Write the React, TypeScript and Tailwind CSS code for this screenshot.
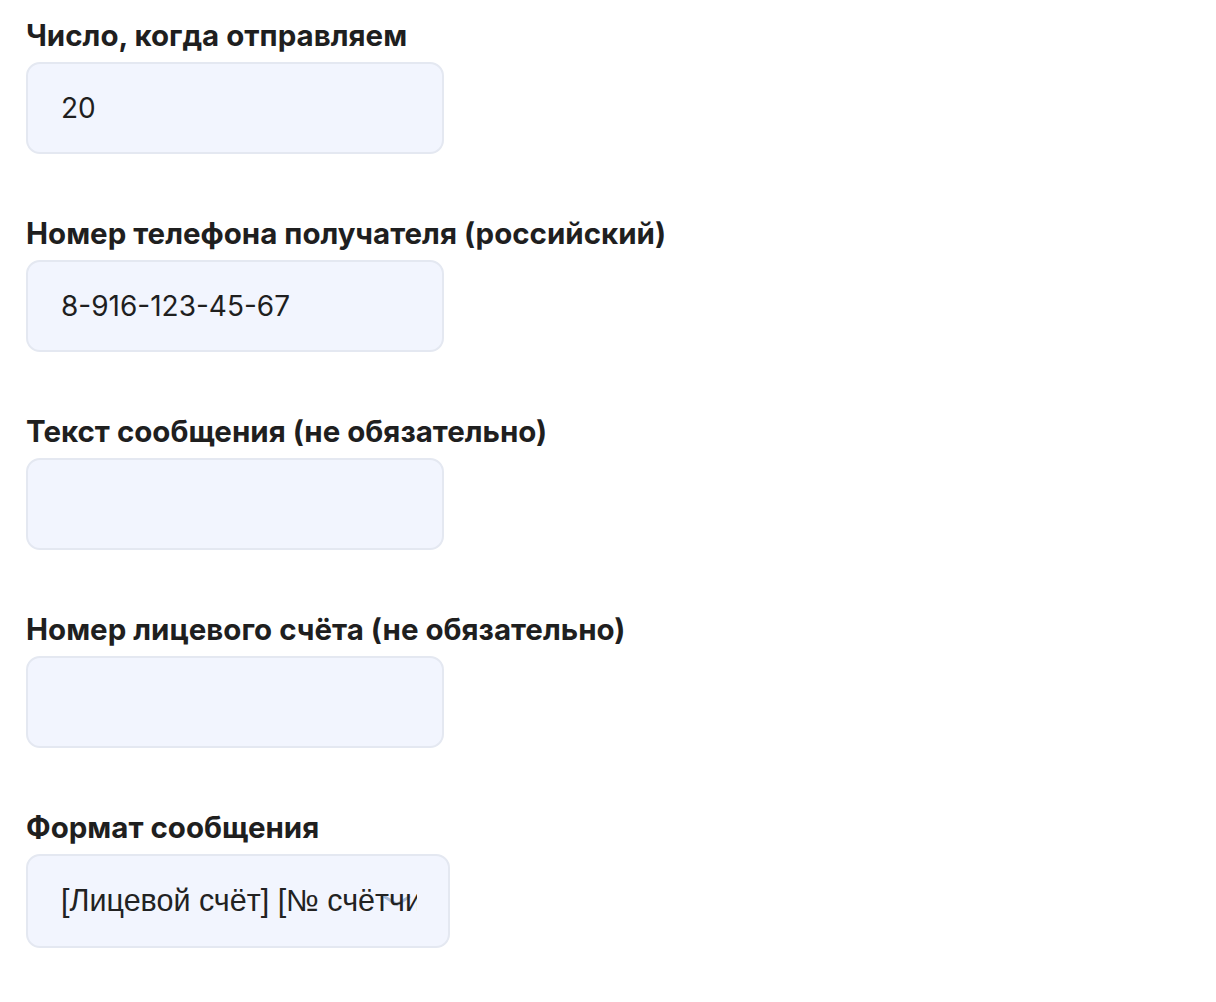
import React from "react";

const labelCls =
  "block text-[29.5px] leading-[36px] font-bold text-[#1f1f1f] [font-family:Inter,Roboto,sans-serif]";
const inputCls =
  "flex items-center h-[92px] w-[418px] rounded-[14px] border-2 border-[#e4e8f1] bg-[#f2f5fe] pl-[33px] text-[28px] text-[#1f1f1f] [font-family:Inter,Roboto,sans-serif]";

function Field({ label, value, first }: { label: string; value?: string; first?: boolean }) {
  return (
    <div className={first ? "" : "mt-[61px]"}>
      <label className={labelCls}>{label}</label>
      <div className={"mt-[9px] " + inputCls}>{value ?? ""}</div>
    </div>
  );
}

export default function App() {
  return (
    <div className="min-h-[1002px] w-[1216px] bg-white pl-[26px] pt-[17px]">
      <Field first label="Число, когда отправляем" value="20" />
      <Field label="Номер телефона получателя (российский)" value="8-916-123-45-67" />
      <Field label="Текст сообщения (не обязательно)" />
      <Field label="Номер лицевого счёта (не обязательно)" />
      <div className="mt-[61px]">
        <label className={labelCls}>Формат сообщения</label>
        <div className="relative mt-[9px] flex h-[94px] w-[424px] items-center overflow-hidden rounded-[14px] border-2 border-[#e4e8f1] bg-[#f2f5fe] pl-[33px] pr-[31px]">
          <svg
            className="absolute left-[355px] top-[39px]"
            width="28"
            height="12"
            viewBox="0 0 28 12"
            fill="none"
          >
            <path d="M2 2 L14 9.5 L26 2" stroke="#a5b9d6" strokeWidth="3" strokeLinecap="round" strokeLinejoin="round" />
          </svg>
          <span className="relative z-10 overflow-hidden whitespace-nowrap text-[30.5px] text-[#222222] [font-family:'Liberation_Sans',Arial,sans-serif]">
            [Лицевой счёт] [№ счётчика] [Показания]
          </span>
        </div>
      </div>
    </div>
  );
}
